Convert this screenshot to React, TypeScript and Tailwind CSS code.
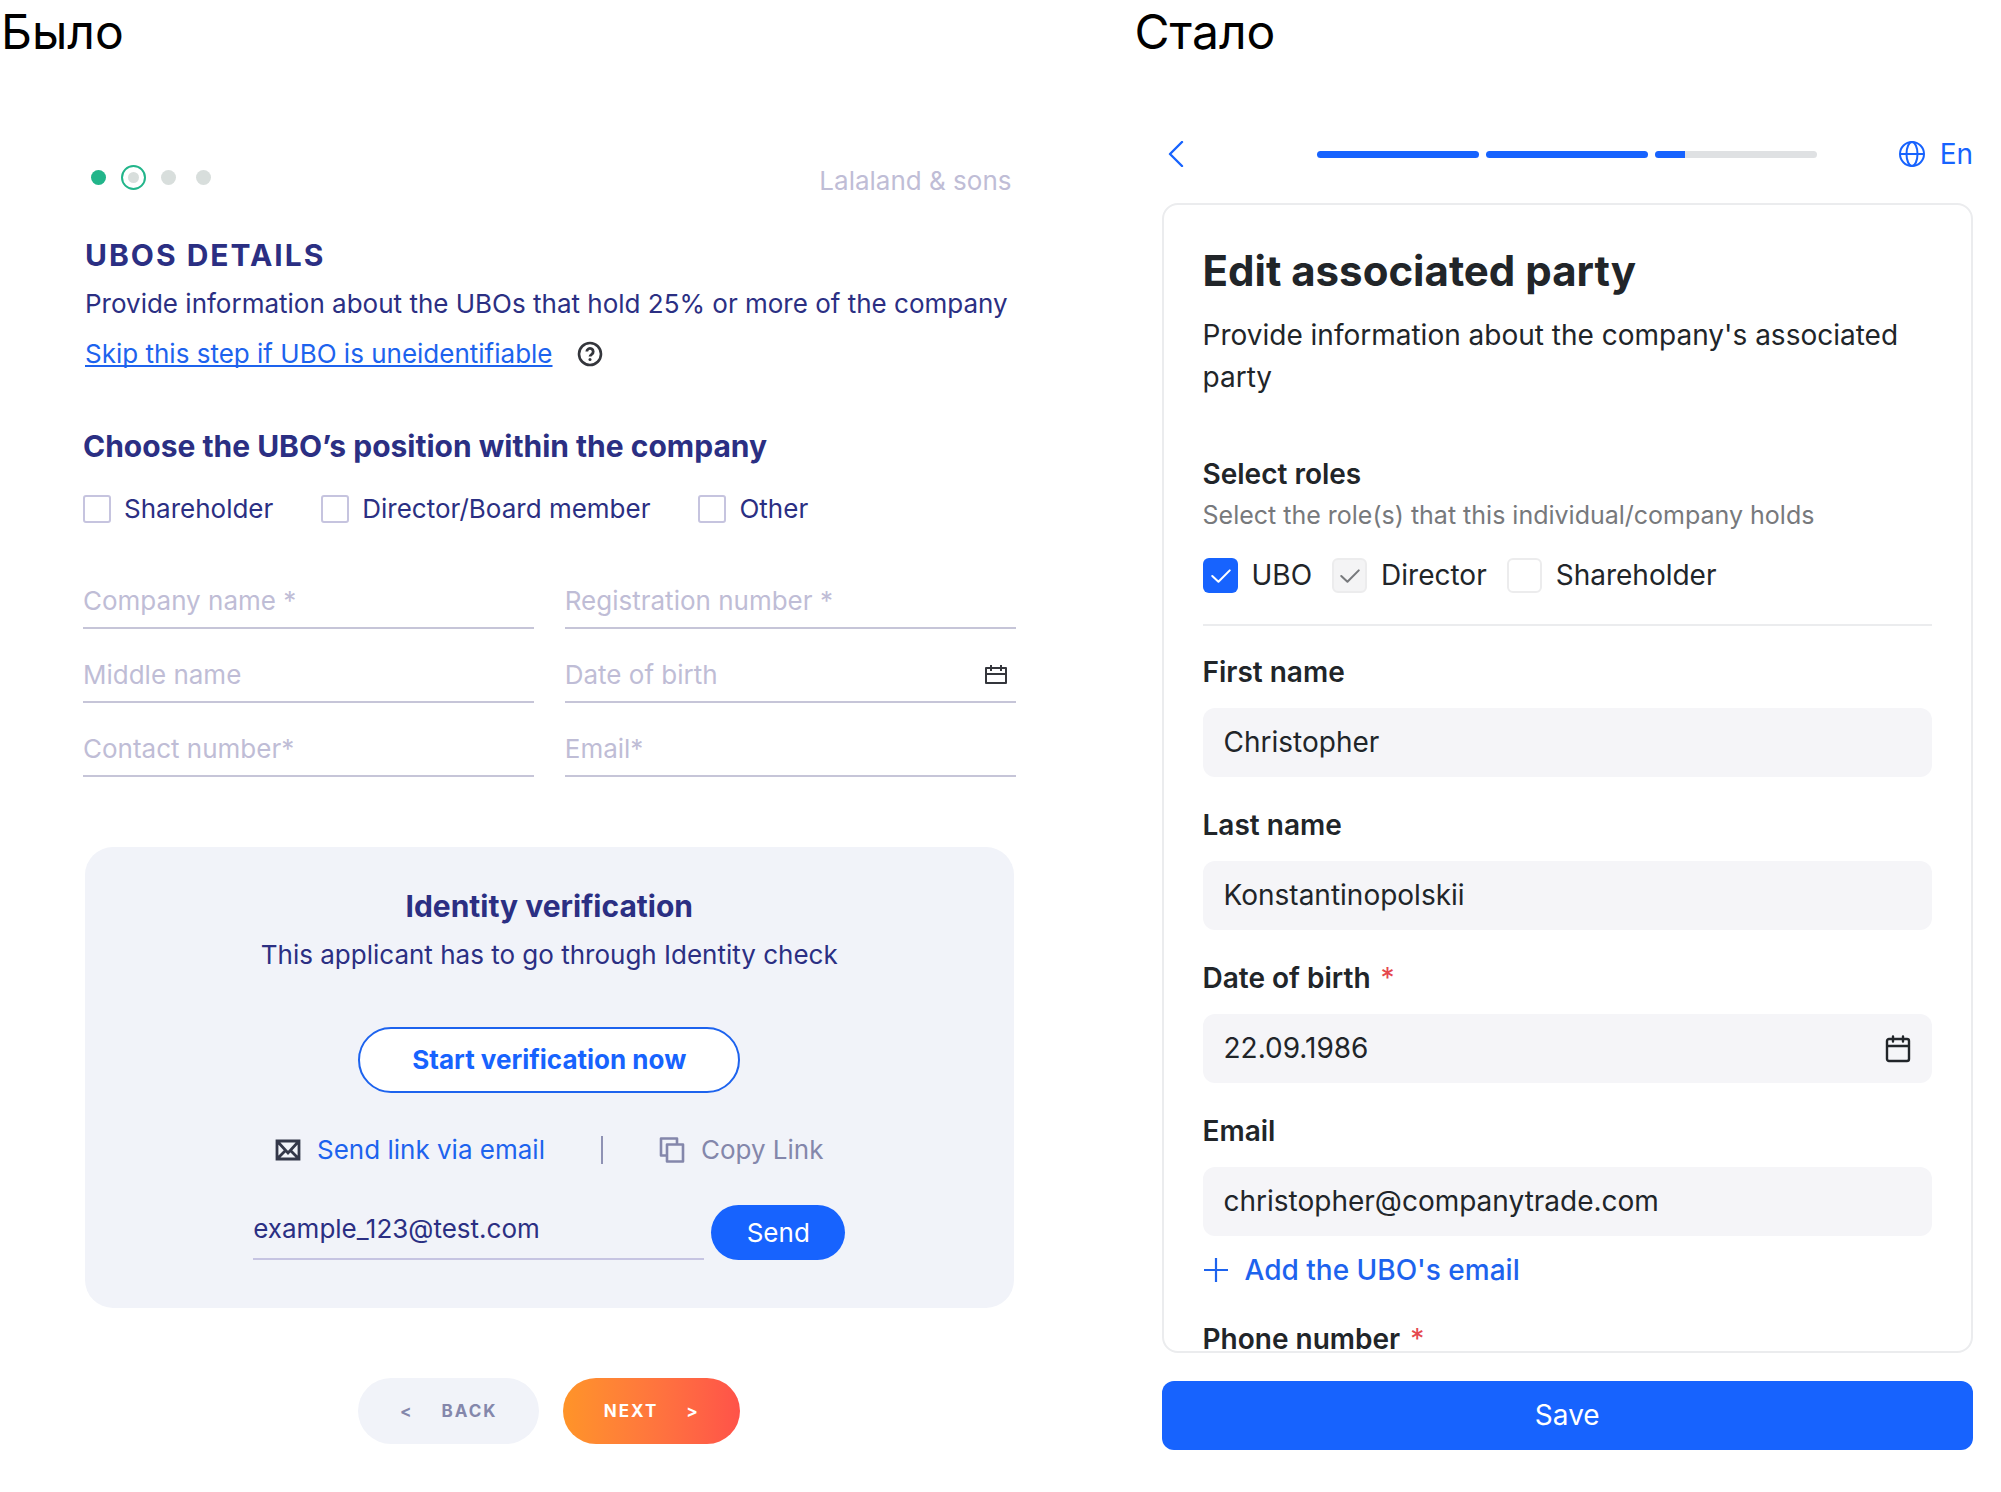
import { useState } from "react";
import type { ReactNode } from "react";

const CheckMark = ({ className }: { className: string }) => (
  <svg viewBox="0 0 34 34" fill="none" stroke="currentColor" strokeWidth="2" strokeLinecap="round" strokeLinejoin="round" className={className} aria-hidden="true">
    <path d="M9 17.500l6 5.500L26 12" />
  </svg>
);

const StepDots = () => (
  <div className="flex items-center gap-5">
    <span className="size-[15px] rounded-full bg-[#22b58a]" />
    <span className="-mx-[5px] flex size-[25px] items-center justify-center rounded-full border-2 border-[#22b58a]">
      <span className="size-[11px] rounded-full bg-[#d8dedc]" />
    </span>
    <span className="size-[15px] rounded-full bg-[#d8dedc]" />
    <span className="size-[15px] rounded-full bg-[#d8dedc]" />
  </div>
);

const PositionOption = ({ label }: { label: string }) => (
  <label className="flex items-center gap-[13px]">
    <input type="checkbox" className="size-7 appearance-none rounded-[3px] border-2 border-[#c6c4df] bg-white" />
    {label}
  </label>
);

const LineField = ({ label, children }: { label: string; children?: ReactNode }) => (
  <div className="flex h-[54px] items-center border-b-2 border-[#c6c5d8]">
    <input aria-label={label} placeholder={label} className="w-full min-w-0 bg-transparent outline-none placeholder:text-[#bfbdd6]" />
    {children}
  </div>
);

const OldForm = () => (
  <section className="w-[53%] font-['Inter',sans-serif] text-[26px] leading-8 text-[#2b2f83]">
    <h2 className="pl-px pt-2 text-[48px] leading-[48px] text-black">Было</h2>
    <div className="pl-[83px] pr-[45px] pt-[104px]">
      <div className="flex h-[34px] items-center justify-between pl-2 pr-1">
        <StepDots />
        <span className="mt-2 text-[#bfbdd6]">Lalaland &amp; sons</span>
      </div>

      <div className="pl-0.5">
        <h3 className="mt-[43px] text-[30px] font-bold leading-9 tracking-[2px]">UBOS DETAILS</h3>
        <p className="mt-[15px] whitespace-nowrap">Provide information about the UBOs that hold 25% or more of the company</p>
        <div className="mt-[18px] flex items-center gap-6">
          <a href="#" className="text-[#1d63ee] underline decoration-2 underline-offset-2 [text-decoration-skip-ink:none]">
            Skip this step if UBO is uneidentifiable
          </a>
          <button type="button" aria-label="Help">
            <svg viewBox="0 0 26 26" fill="none" stroke="#34363c" className="size-[26px]">
              <circle cx="13" cy="13" r="11" strokeWidth="2.6" />
              <path d="M9.800 10.600a3.200 3.200 0 1 1 4.900 2.700c-1.200.8-1.700 1.300-1.700 2.300" strokeWidth="2.8" />
              <circle cx="13" cy="18.600" r="1.500" fill="#34363c" stroke="none" />
            </svg>
          </button>
        </div>
      </div>

      <fieldset>
        <legend className="pt-[58px] text-[30px] font-bold leading-9">Choose the UBO’s position within the company</legend>
        <div className="mt-[29px] flex gap-12">
          <PositionOption label="Shareholder" />
          <PositionOption label="Director/Board member" />
          <PositionOption label="Other" />
        </div>
      </fieldset>

      <div className="mt-[50px] grid grid-cols-2 gap-x-[31px] gap-y-5">
        <LineField label="Company name *" />
        <LineField label="Registration number *" />
        <LineField label="Middle name" />
        <LineField label="Date of birth">
          <svg viewBox="0 0 24 20" fill="none" stroke="#34363c" strokeWidth="2" strokeLinejoin="round" className="mr-2 h-5 w-6 shrink-0">
            <path d="M2 3h20v15H2zM2 9h20M7 0v6M17 0v6" />
          </svg>
        </LineField>
        <LineField label="Contact number*" />
        <LineField label="Email*" />
      </div>

      <div className="mx-0.5 mt-[70px] flex h-[461px] flex-col items-center rounded-[28px] bg-[#f1f3f9] pt-[41px]">
        <h3 className="text-[30px] font-bold leading-9">Identity verification</h3>
        <p className="mt-[15px]">This applicant has to go through Identity check</p>
        <button type="button" className="mt-14 h-[66px] w-[382px] rounded-full border-2 border-[#1d63ee] bg-white font-bold text-[#1763fe]">
          Start verification now
        </button>
        <div className="mt-[41px] flex items-center">
          <button type="button" className="flex items-center gap-4 text-[#1d63ee]">
            <svg viewBox="0 0 26 22" fill="none" stroke="#34384a" strokeWidth="2.800" className="h-[22px] w-[26px]">
              <path d="M2 2h22v18H2zM2.500 2.500L13 14 23.500 2.500M2.500 19.500l8-8M23.500 19.500l-8-8" />
            </svg>
            Send link via email
          </button>
          <span className="mx-[56px] h-7 w-[2px] bg-[#8f92b4]" />
          <button type="button" className="flex items-center gap-4 text-[#8487ab]">
            <svg viewBox="0 0 26 26" fill="none" stroke="currentColor" strokeWidth="2.600" strokeLinejoin="round" className="size-[26px]">
              <path d="M8 7.500h16v17H8zM7 18.500H2v-17h16V7" />
            </svg>
            Copy Link
          </button>
        </div>
        <form className="mt-[39px] flex items-end gap-[7px]">
          <input
            type="email"
            aria-label="Applicant email"
            defaultValue="example_123@test.com"
            className="h-[54px] w-[451px] border-b-2 border-[#c6c4e2] bg-transparent pb-2 outline-none"
          />
          <button type="button" className="h-[55px] w-[134px] rounded-full bg-[#1763fe] text-white">Send</button>
        </form>
      </div>

      <div className="mt-[70px] flex justify-center gap-6 text-[17px] font-bold tracking-[2px]">
        <button type="button" className="flex h-[66px] w-[181px] items-center justify-center gap-7 rounded-full bg-[#f1f3f9] text-[#8487ab]">
          <span>&lt;</span>
          <span>BACK</span>
        </button>
        <button type="button" className="flex h-[66px] w-[177px] items-center justify-center gap-7 rounded-full bg-linear-to-r from-[#ff9428] to-[#ff5249] text-white">
          <span>NEXT</span>
          <span>&gt;</span>
        </button>
      </div>
    </div>
  </section>
);

const BoxField = ({ id, label, value, required, children }: { id: string; label: string; value: string; required?: boolean; children?: ReactNode }) => (
  <div>
    <label htmlFor={id} className="block font-semibold">
      {label}
      {required && <span className="ml-2.5 font-normal text-[#e5484d]">*</span>}
    </label>
    <div className="mt-[15px] flex h-[69px] items-center rounded-xl bg-[#f5f5f8] px-[21px]">
      <input id={id} defaultValue={value} className="w-full min-w-0 bg-transparent pb-0.5 outline-none" />
      {children}
    </div>
  </div>
);

const RoleOption = ({ label, initial, disabled }: { label: string; initial?: boolean; disabled?: boolean }) => {
  const [checked, setChecked] = useState(Boolean(initial));
  const box = disabled
    ? "bg-[#f4f4f5] border-2 border-[#ececed]"
    : checked
      ? "bg-[#1763fe]"
      : "bg-white border-2 border-[#ececed]";

  return (
    <label className="flex items-center gap-[14px]">
      <span className="grid">
        <input
          type="checkbox"
          checked={checked}
          disabled={disabled}
          onChange={() => setChecked(!checked)}
          className={`col-start-1 row-start-1 size-[35px] appearance-none rounded-md ${box}`}
        />
        {checked && <CheckMark className={`pointer-events-none col-start-1 row-start-1 size-[35px] ${disabled ? "text-[#77797c]" : "text-white"}`} />}
      </span>
      {label}
    </label>
  );
};

const NewForm = () => (
  <section className="flex-1 pl-[101px] pr-[28px] font-['Inter',sans-serif] text-[28px] leading-[42px] text-[#212529]">
    <h2 className="-ml-[27px] pt-2 text-[48px] leading-[48px] text-black">Стало</h2>

    <div className="mt-[77px] flex h-[42px] items-center text-[#1763fe]">
      <button type="button" aria-label="Back" className="pl-1">
        <svg viewBox="0 0 20 26" fill="none" stroke="currentColor" strokeWidth="2.400" strokeLinecap="round" strokeLinejoin="round" className="h-[26px] w-5">
          <path d="M16 1L4 13l12 12" />
        </svg>
      </button>
      <div className="ml-[131px] mr-[81px] grid flex-1 grid-cols-3 gap-[7px]">
        <span className="h-[7px] rounded-full bg-[#1763fe]" />
        <span className="h-[7px] rounded-full bg-[#1763fe]" />
        <span className="h-[7px] overflow-hidden rounded-full bg-[#dfe1e3]">
          <span className="block h-full w-[30px] bg-[#1763fe]" />
        </span>
      </div>
      <button type="button" className="flex items-center gap-[14px]">
        <svg viewBox="0 0 28 28" fill="none" stroke="currentColor" strokeWidth="2" className="size-7">
          <circle cx="14" cy="14" r="12" />
          <ellipse cx="14" cy="14" rx="5.500" ry="12" />
          <path d="M2 14h24" />
        </svg>
        En
      </button>
    </div>

    <div className="mt-7 h-[1150px] overflow-hidden rounded-2xl border-2 border-[#ebecee] px-[39px] pt-10">
      <h3 className="text-[42px] font-bold leading-[52px]">Edit associated party</h3>
      <p className="mt-[17px]">Provide information about the company's associated party</p>

      <fieldset className="mt-[55px]">
        <legend className="font-semibold">Select roles</legend>
        <p className="text-[25px] leading-[40px] text-[#77797c]">Select the role(s) that this individual/company holds</p>
        <div className="mt-[19px] flex gap-5">
          <RoleOption label="UBO" initial />
          <RoleOption label="Director" initial disabled />
          <RoleOption label="Shareholder" />
        </div>
      </fieldset>
      <hr className="mt-7 border-t-2 border-[#ebecee]" />

      <div className="mt-[25px] flex flex-col gap-[27px]">
        <BoxField id="first-name" label="First name" value="Christopher" />
        <BoxField id="last-name" label="Last name" value="Konstantinopolskii" />
        <BoxField id="birth" label="Date of birth" value="22.09.1986" required>
          <svg viewBox="0 0 26 28" fill="none" stroke="currentColor" strokeWidth="2.400" strokeLinecap="round" strokeLinejoin="round" className="h-7 w-[26px] shrink-0">
            <path d="M4 4h18a2 2 0 0 1 2 2v18a2 2 0 0 1-2 2H4a2 2 0 0 1-2-2V6a2 2 0 0 1 2-2zM2 11h22M8 1.500v5M18 1.500v5" />
          </svg>
        </BoxField>
        <BoxField id="email" label="Email" value="christopher@companytrade.com" />
      </div>
      <button type="button" className="mt-[13px] flex items-center gap-4 font-medium text-[#1d63ee]">
        <svg viewBox="0 0 26 26" fill="none" stroke="currentColor" strokeWidth="2.200" className="size-[26px]">
          <path d="M13 1v24M1 13h24" />
        </svg>
        Add the UBO's email
      </button>
      <label htmlFor="phone" className="mt-9 block font-semibold leading-6">
        Phone number<span className="ml-2.5 font-normal text-[#e5484d]">*</span>
      </label>
      <input id="phone" type="tel" className="mt-6 h-[69px] w-full rounded-xl bg-[#f5f5f8] px-[21px]" />
    </div>

    <button type="button" className="mt-7 h-[69px] w-full rounded-xl bg-[#1763fe] pb-0.5 text-white">Save</button>
  </section>
);

export default function App() {
  return (
    <main className="flex bg-white pb-[42px]">
      <OldForm />
      <NewForm />
    </main>
  );
}
